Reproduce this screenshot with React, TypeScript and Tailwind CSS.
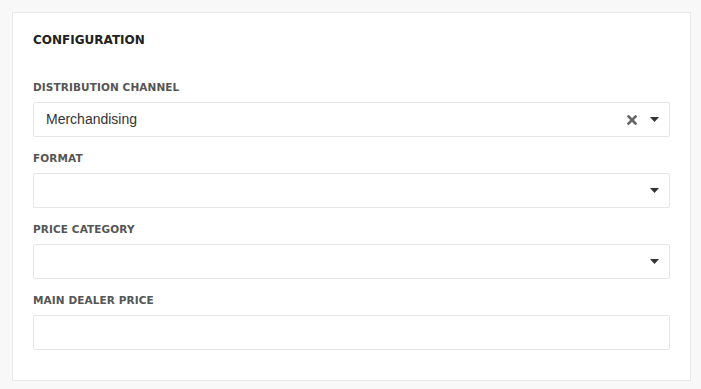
import React from 'react';

const heading = { fontFamily: '"DejaVu Sans", "Open Sans", sans-serif' };

const Caret = () => (
  <svg width="9" height="5" viewBox="0 0 9 5" className="text-[#333]">
    <path d="M0 0h9L4.5 5z" fill="currentColor" />
  </svg>
);

const Clear = () => (
  <svg width="10" height="10" viewBox="0 0 10 10" className="text-[#666]">
    <path d="M1.5 1.5l7 7M8.5 1.5l-7 7" stroke="currentColor" strokeWidth="2.6" strokeLinecap="square" />
  </svg>
);

interface FieldProps {
  label: string;
  value?: string;
  select?: boolean;
  clearable?: boolean;
  first?: boolean;
}

const Field: React.FC<FieldProps> = ({ label, value, select, clearable, first }) => (
  <div className={first ? 'mt-[32px]' : 'mt-[14px]'}>
    <div
      className="text-[10.5px] leading-[14px] font-bold text-[#555] tracking-[0.1px]"
      style={heading}
    >
      {label}
    </div>
    <div className="mt-[8px] h-[35px] flex items-center border border-[#e6e6e6] rounded-[2px] bg-white pl-[12px] pr-[10px]">
      <span className="flex-1 text-[14px] text-[#333]">{value}</span>
      {clearable && (
        <span className="mr-[13px] flex items-center">
          <Clear />
        </span>
      )}
      {select && <Caret />}
    </div>
  </div>
);

export default function App() {
  return (
    <div
      className="w-[701px] h-[389px] bg-[#f8f8f8] pt-[12px] pl-[12px]"
      style={{ fontFamily: '"Liberation Sans", Arial, sans-serif' }}
    >
      <div className="w-[679px] h-[369px] bg-white border border-[#e8e8e8] pt-[19px] px-[20px]">
        <div className="text-[12px] leading-[16px] font-bold text-[#222]" style={heading}>
          CONFIGURATION
        </div>
        <Field first label="DISTRIBUTION CHANNEL" value="Merchandising" select clearable />
        <Field label="FORMAT" select />
        <Field label="PRICE CATEGORY" select />
        <Field label="MAIN DEALER PRICE" />
      </div>
    </div>
  );
}
